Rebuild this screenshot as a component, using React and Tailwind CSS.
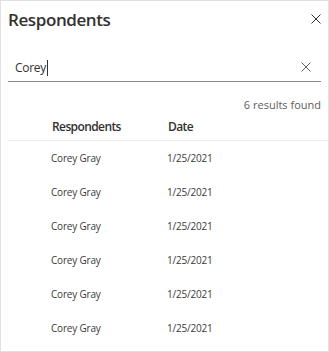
const rows = Array.from({ length: 6 }, (_, i) => ({ id: i, name: 'Corey Gray', date: '1/25/2021' }));

const Cross = ({ className }) => (
  <svg width="10" height="10" viewBox="0 0 10 10" className={className}>
    <path d="M0.5 0.5 L9.5 9.5 M9.5 0.5 L0.5 9.5" stroke="currentColor" strokeWidth="1" fill="none" />
  </svg>
);

const App = () => {
  return (
    <div
      className="w-[329px] h-[352px] bg-white border border-[#e1e1e1] overflow-hidden text-[#323130]"
      style={{ fontFamily: '"Open Sans", "Noto Sans", sans-serif' }}
    >
      {/* Header */}
      <div className="flex items-center justify-between h-[38px] pl-[7px] pr-[7px]">
        <h1 className="text-[17px] font-semibold tracking-[-0.4px]">Respondents</h1>
        <Cross className="text-[#323130] -mt-[3px]" />
      </div>

      {/* Search */}
      <div className="mx-[7px] mt-[12px] flex items-center h-[31px] border-b border-[#8a8886]">
        <span className="pl-[7px] pt-[3px] text-[12px] tracking-[-0.3px] flex-1 flex items-center">
          Corey<span className="ml-px w-px h-[16px] bg-[#323130] inline-block" />
        </span>
        <Cross className="mr-[10px] mt-[2px] text-[#605e5c]" />
      </div>

      <div className="text-right pr-[7px] mt-[15px] text-[11px] text-[#605e5c] h-[16px] leading-[16px]">
        6 results found
      </div>

      {/* Table header */}
      <div className="ml-[7px] flex items-center h-[28px] border-b border-[#edebe9] text-[12px] tracking-[-0.6px] font-semibold">
        <div className="w-[160px] pl-[44px]">Respondents</div>
        <div>Date</div>
      </div>

      {rows.map((r) => (
        <div key={r.id} className="ml-[7px] flex items-center h-[34px] text-[10px] tracking-[-0.2px] text-[#3b3a39]">
          <div className="w-[159px] pl-[43px]">{r.name}</div>
          <div>{r.date}</div>
        </div>
      ))}
    </div>
  );
};

export default App;
